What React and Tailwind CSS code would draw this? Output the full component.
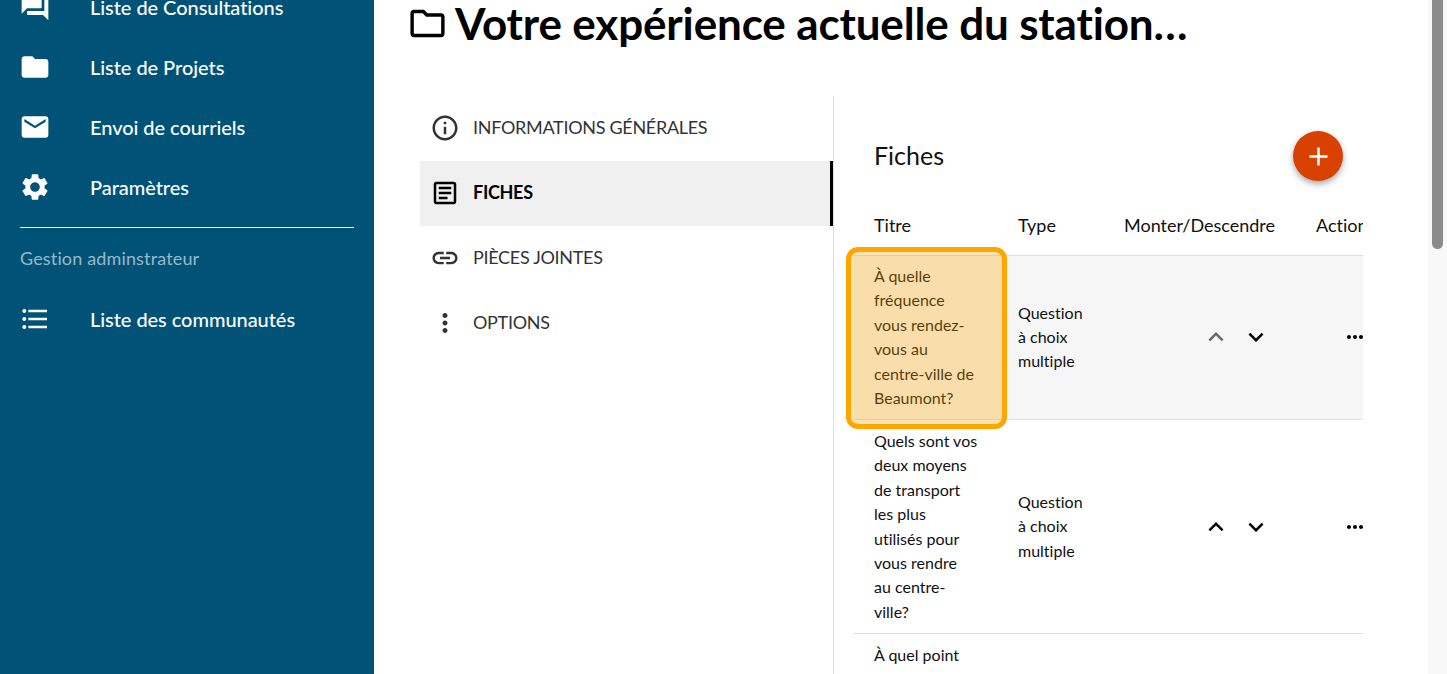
import React from 'react';
import {
    MdQuestionAnswer, MdFolder, MdEmail, MdSettings, MdFormatListBulleted, MdOutlineFolder,
    MdInfoOutline, MdOutlineArticle, MdLink, MdMoreVert, MdAdd, MdKeyboardArrowUp, MdKeyboardArrowDown, MdMoreHoriz,
} from 'react-icons/md';

const navTop = [
    { icon: MdQuestionAnswer, label: 'Liste de Consultations' },
    { icon: MdFolder, label: 'Liste de Projets' },
    { icon: MdEmail, label: 'Envoi de courriels' },
    { icon: MdSettings, label: 'Paramètres' },
];

const tabs = [
    { icon: MdInfoOutline, label: 'Informations générales' },
    { icon: MdOutlineArticle, label: 'Fiches', active: true },
    { icon: MdLink, label: 'Pièces jointes' },
    { icon: MdMoreVert, label: 'Options' },
];

const rows = [
    { title: ['À quelle', 'fréquence', 'vous rendez-', 'vous au', 'centre-ville de', 'Beaumont?'], upMuted: true, hover: true },
    { title: ['Quels sont vos', 'deux moyens', 'de transport', 'les plus', 'utilisés pour', 'vous rendre', 'au centre-', 'ville?'] },
    { title: ['À quel point'], clipped: true },
];

const NavItem = ({ icon: Icon, label }) => (
    <div className="flex h-[60px] items-center pl-[19px]">
        <Icon size={32} className="text-white shrink-0" />
        <span className="ml-[39px] text-[20px] font-medium tracking-[-0.05px] text-white">{label}</span>
    </div>
);

const App = () => {
    return (
        <div className="relative flex h-[674px] overflow-hidden bg-white font-['Lato',sans-serif] text-black [font-variant-ligatures:none]">
            {/* Sidebar */}
            <aside className="w-[374px] shrink-0 bg-[#005277]">
                <div className="-mt-[23px]">
                    {navTop.map((item) => (
                        <NavItem key={item.label} {...item} />
                    ))}
                </div>
                <div className="mx-5 mt-[10px] border-t border-white" />
                <div className="ml-5 mt-[18px] text-[18px] leading-[24px] tracking-[0.15px] text-white/60">Gestion adminstrateur</div>
                <div className="mt-[19px]">
                    <NavItem icon={MdFormatListBulleted} label="Liste des communautés" />
                </div>
            </aside>

            {/* Main */}
            <main className="min-w-0 flex-1">
                <div className="flex h-[96px] items-start pl-[33px]">
                    <MdOutlineFolder size={41} className="mt-[3px] shrink-0" />
                    <h1 className="-mt-[1px] ml-[7px] text-[44px] font-bold leading-[48px] tracking-[-0.15px] whitespace-nowrap">Votre expérience actuelle du station…</h1>
                </div>
                <div className="ml-[46px] flex">
                    <nav className="w-[413px] shrink-0">
                        {tabs.map((tab) => (
                            <div
                                key={tab.label}
                                className={tab.active
                                    ? 'flex h-[65px] items-center border-r-[3px] border-black bg-[#f0f0f0] pb-[2px] pl-[10px]'
                                    : 'flex h-[65px] items-center pb-[2px] pl-[10px]'}
                            >
                                <tab.icon size={30} className={tab.active ? 'shrink-0 text-black' : 'shrink-0 text-[#333]'} />
                                <span className={tab.active
                                    ? 'ml-[13px] text-[18px] font-bold uppercase tracking-[-0.3px] text-black'
                                    : 'ml-[13px] text-[18px] uppercase tracking-[-0.3px] text-[#333]'}
                                >
                                    {tab.label}
                                </span>
                            </div>
                        ))}
                    </nav>

                    <section className="h-[578px] w-[530px] shrink-0 overflow-hidden border-l border-[#ddd] pl-5">
                        <div className="flex items-center justify-between pl-5 pr-5 pt-[35px]">
                            <h2 className="pb-[2px] text-[25px] leading-[48px] text-[#111]">Fiches</h2>
                            <button className="flex h-[50px] w-[50px] items-center justify-center rounded-full bg-[#d84100] text-white shadow-[0_3px_6px_rgba(0,0,0,0.35)]">
                                <MdAdd size={31} />
                            </button>
                        </div>
                        <table className="mt-[14px] w-[540px] table-fixed border-collapse text-left text-[16px] leading-[24.4px] text-[#111]">
                            <colgroup>
                                <col className="w-[144px]" />
                                <col className="w-[106px]" />
                                <col className="w-[192px]" />
                                <col />
                            </colgroup>
                            <thead>
                                <tr className="h-[60px] border-b border-[#e0e0e0] text-[18px]">
                                    <th className="px-5 font-normal">Titre</th>
                                    <th className="px-5 font-normal">Type</th>
                                    <th className="px-5 font-normal whitespace-nowrap">Monter/Descendre</th>
                                    <th className="px-5 font-normal">Actions</th>
                                </tr>
                            </thead>
                            <tbody>
                                {rows.map((row) => (
                                    <tr
                                        key={row.title[0]}
                                        className={row.clipped
                                            ? 'h-[200px] border-b border-[#e0e0e0]'
                                            : row.hover ? 'border-b border-[#e0e0e0] bg-[#f6f6f6]' : 'border-b border-[#e0e0e0]'}
                                    >
                                        <td className={row.hover ? 'px-5 py-[8.5px] align-top whitespace-nowrap' : 'px-5 py-[9px] align-top whitespace-nowrap'}>
                                            {row.title.map((line) => (
                                                <div key={line}>{line}</div>
                                            ))}
                                        </td>
                                        <td className="px-5 py-[8.5px]">{!row.clipped && 'Question à choix multiple'}</td>
                                        <td className="py-[8.5px] pl-[97px]">
                                            {!row.clipped && (
                                                <div className="flex gap-[10px]">
                                                    <MdKeyboardArrowUp size={30} className={row.upMuted ? 'text-[#666]' : 'text-black'} />
                                                    <MdKeyboardArrowDown size={30} className="text-black" />
                                                </div>
                                            )}
                                        </td>
                                        <td className="px-5 py-[8.5px]">
                                            {!row.clipped && <MdMoreHoriz size={24} className="ml-[27px] text-black" />}
                                        </td>
                                    </tr>
                                ))}
                            </tbody>
                        </table>
                    </section>
                </div>
            </main>

            {/* Scrollbar */}
            <div className="w-[19px] shrink-0 bg-[#f8f8f8] pl-[4px]">
                <div className="h-[249px] w-[11px] rounded-b-full bg-[#8c8c8c]" />
            </div>

            {/* Highlight over first row title */}
            <div className="absolute left-[846px] top-[247px] h-[182px] w-[161px] rounded-[12px] border-[5px] border-[#ffa500] bg-[#ffa500]/30" />
        </div>
    );
};

export default App;
